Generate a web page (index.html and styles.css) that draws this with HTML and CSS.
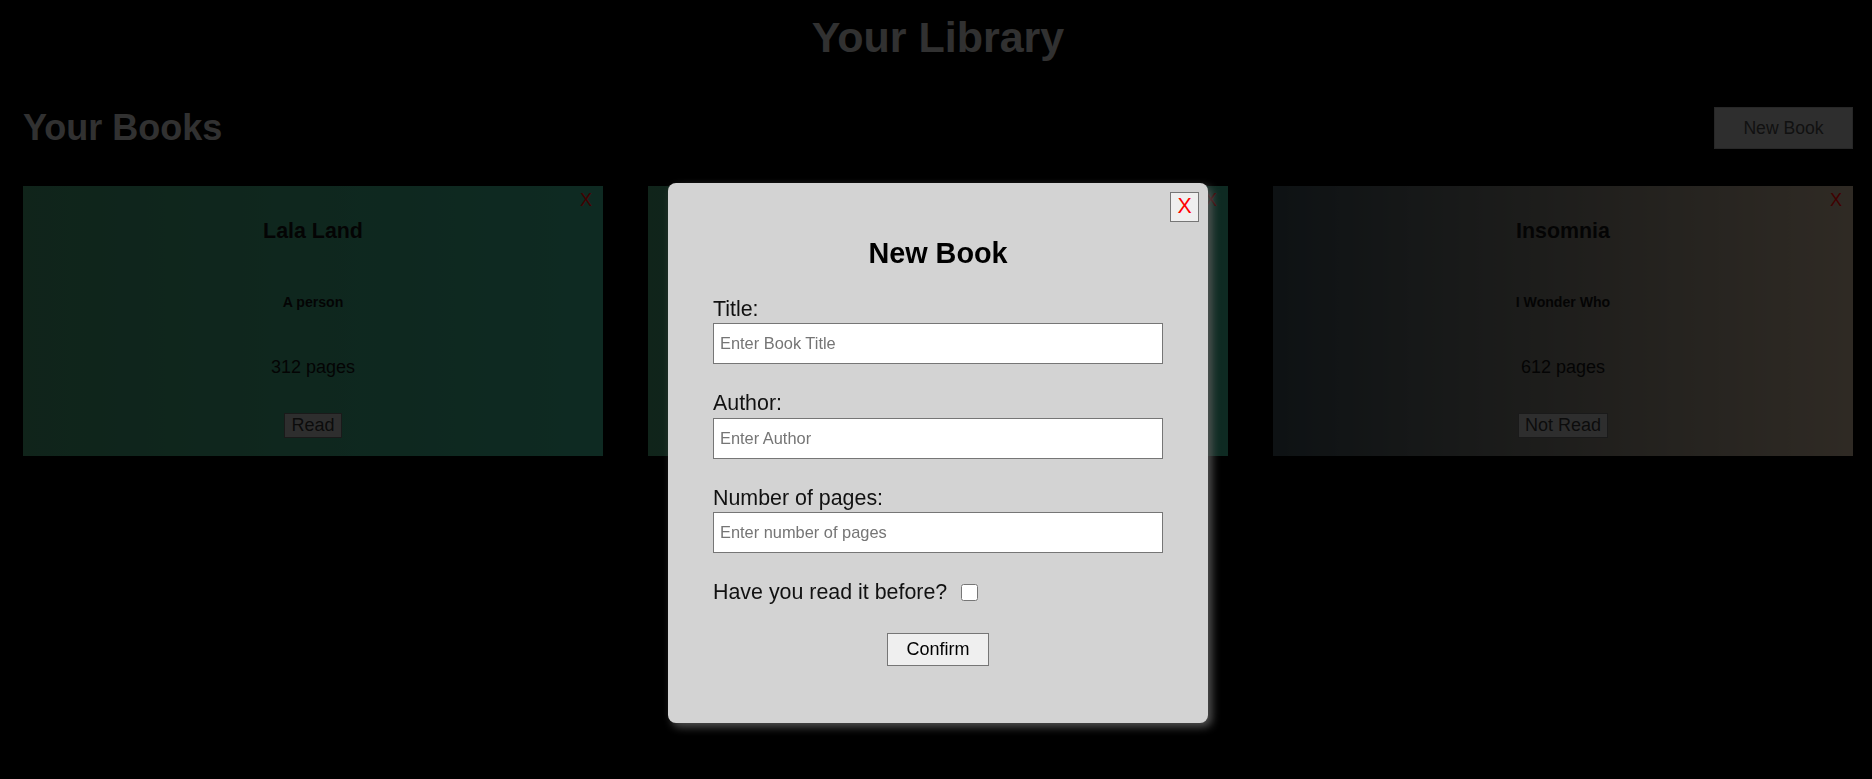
FILE: index.html
```html
<!DOCTYPE html>
<html lang="en">
<head>
<meta charset="utf-8">
<title>Your Library</title>
<link rel="stylesheet" href="styles.css">
</head>
<body>
  <div class="page">
    <header class="site-header">
      <h1 class="site-title">Your Library</h1>
    </header>
    <main class="library">
      <div class="library-head">
        <h2 class="library-title">Your Books</h2>
        <button class="new-book-btn" type="button">New Book</button>
      </div>
      <div class="book-grid">
        <article class="book-card card-green">
          <button class="remove-btn" type="button">X</button>
          <h3 class="book-title">Lala Land</h3>
          <h5 class="book-author">A person</h5>
          <p class="book-pages">312 pages</p>
          <button class="status-btn" type="button">Read</button>
        </article>
        <article class="book-card card-green">
          <button class="remove-btn" type="button">X</button>
          <h3 class="book-title">The Hobbit</h3>
          <h5 class="book-author">J. R. R. Tolkien</h5>
          <p class="book-pages">295 pages</p>
          <button class="status-btn" type="button">Read</button>
        </article>
        <article class="book-card card-brown">
          <button class="remove-btn" type="button">X</button>
          <h3 class="book-title">Insomnia</h3>
          <h5 class="book-author">I Wonder Who</h5>
          <p class="book-pages">612 pages</p>
          <button class="status-btn" type="button">Not Read</button>
        </article>
      </div>
    </main>
  </div>

  <div class="overlay"></div>

  <div class="modal" role="dialog" aria-labelledby="modal-title">
    <button class="modal-close" type="button">X</button>
    <h2 class="modal-title" id="modal-title">New Book</h2>
    <form class="book-form">
      <div class="field">
        <label class="field-label" for="title">Title:</label>
        <input class="field-input" id="title" type="text" placeholder="Enter Book Title">
      </div>
      <div class="field">
        <label class="field-label" for="author">Author:</label>
        <input class="field-input" id="author" type="text" placeholder="Enter Author">
      </div>
      <div class="field">
        <label class="field-label" for="pages">Number of pages:</label>
        <input class="field-input" id="pages" type="text" placeholder="Enter number of pages">
      </div>
      <div class="check-row">
        <label class="field-label" for="read">Have you read it before?</label>
        <input class="check-input" id="read" type="checkbox">
      </div>
      <div class="form-actions">
        <button class="confirm-btn" type="button">Confirm</button>
      </div>
    </form>
  </div>
</body>
</html>
```
FILE: styles.css
```css
* {
  box-sizing: border-box;
}

html, body {
  margin: 0;
  padding: 0;
  background: #000;
  font-family: "Liberation Sans", Arial, sans-serif;
}

.page {
  padding: 0 19px 0 23px;
}

.site-header {
  padding-top: 13px;
  text-align: center;
}

.site-title {
  margin: 0;
  font-size: 43px;
  font-weight: bold;
  color: #c4c4c4;
}

.library-head {
  display: flex;
  align-items: center;
  justify-content: space-between;
  margin-top: 45px;
}

.library-title {
  margin: 0;
  font-size: 36px;
  font-weight: bold;
  color: #c4c4c4;
}

.new-book-btn {
  width: 139px;
  height: 42px;
  padding: 0;
  border: 1px solid #9a9a9a;
  background: #b8b8b8;
  color: #444;
  font-family: inherit;
  font-size: 17.6px;
}

.book-grid {
  display: grid;
  grid-template-columns: repeat(3, 1fr);
  gap: 45px;
  margin-top: 37px;
}

.book-card {
  position: relative;
  height: 270px;
  display: flex;
  flex-direction: column;
  align-items: center;
  padding-top: 32.5px;
  color: #111;
}

.card-green {
  background: linear-gradient(to right, #40906a, #38a888);
}

.card-brown {
  background: linear-gradient(to right, #384850, #bca890);
}

.remove-btn {
  position: absolute;
  top: 4px;
  right: 11px;
  padding: 0;
  border: none;
  background: none;
  color: #ff0000;
  font-family: inherit;
  font-size: 18px;
  line-height: normal;
}

.book-title {
  margin: 0;
  font-size: 21.4px;
  font-weight: bold;
}

.book-author {
  margin: 50px 0 0;
  font-size: 14.1px;
  font-weight: bold;
}

.book-pages {
  margin: 47.5px 0 0;
  font-size: 18px;
}

.status-btn {
  margin-top: 35px;
  padding: 1px 6px;
  border: 1px solid #686868;
  background: #b8b8b8;
  color: #333;
  font-family: inherit;
  font-size: 18px;
}

.overlay {
  position: fixed;
  inset: 0;
  background: rgba(0, 0, 0, 0.75);
}

.modal {
  position: fixed;
  top: 183px;
  left: 668px;
  width: 540px;
  height: 540px;
  padding: 0 45px;
  background: #d3d3d3;
  border-radius: 8px;
  box-shadow: 4px 4px 8px rgba(90, 90, 90, 0.9);
  color: #000;
}

.modal-close {
  position: absolute;
  top: 9px;
  right: 9px;
  width: 29px;
  height: 30px;
  padding: 0;
  border: 1px solid #767676;
  background: #efefef;
  color: #ff0000;
  font-family: inherit;
  font-size: 21.3px;
  line-height: 1;
}

.modal-title {
  margin: 54px 0 27px;
  text-align: center;
  font-size: 28.8px;
  font-weight: bold;
}

.book-form {
  display: flex;
  flex-direction: column;
  gap: 27px;
}

.field {
  display: flex;
  flex-direction: column;
  gap: 1.4px;
}

.field-label {
  font-size: 21.4px;
  color: #111;
}

.field-input {
  width: 100%;
  height: 41px;
  padding: 0 6px;
  border: 1px solid #767676;
  background: #fff;
  font-family: inherit;
  font-size: 16.4px;
  color: #000;
}

.field-input::placeholder {
  color: #757575;
}

.check-row {
  display: flex;
  align-items: center;
  gap: 14px;
}

.check-input {
  width: 17px;
  height: 17px;
  margin: 0;
}

.form-actions {
  display: flex;
  justify-content: center;
  margin-top: 1px;
}

.confirm-btn {
  padding: 5px 18px;
  border: 1px solid #767676;
  background: #efefef;
  color: #000;
  font-family: inherit;
  font-size: 18px;
}
```
